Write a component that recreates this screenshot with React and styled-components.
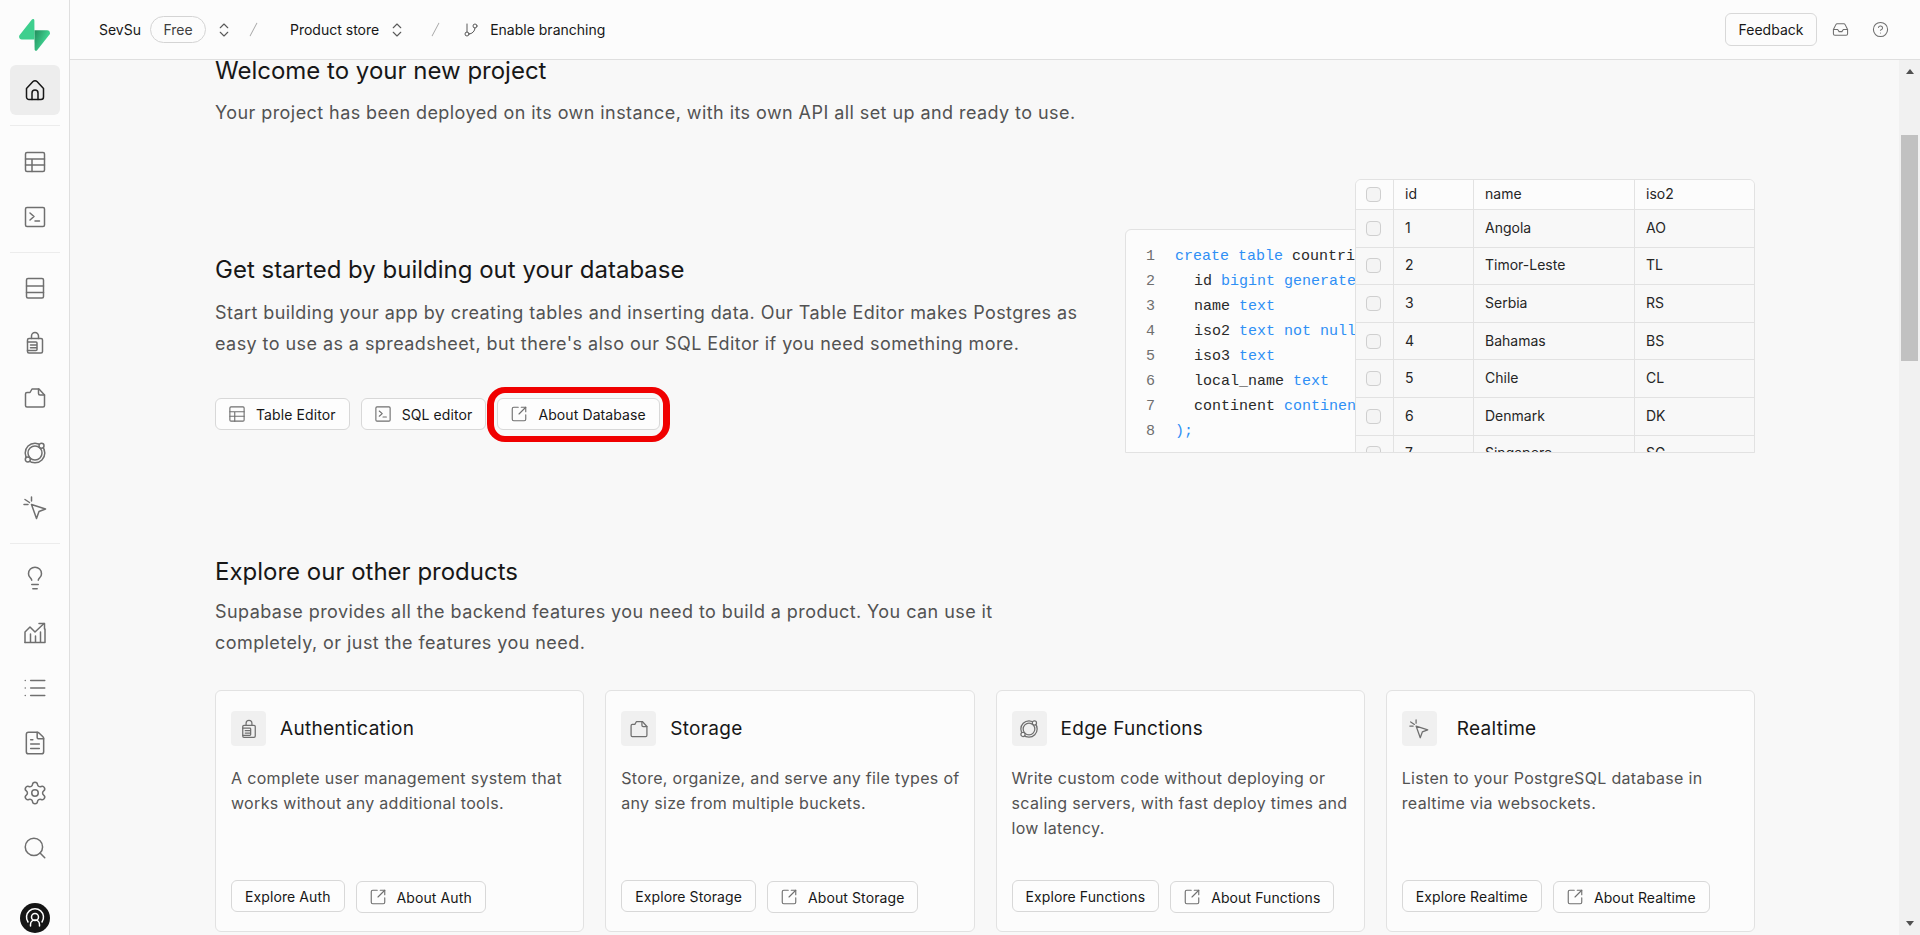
import styled, { createGlobalStyle } from 'styled-components';
import {
  ChevronsUpDown,
  GitBranch,
  Inbox,
  CircleHelp,
  SquareArrowOutUpRight,
  List,
  FileText,
  Settings,
  Search,
  Lightbulb,
} from 'lucide-react';

const GlobalStyle = createGlobalStyle`
  html, body {
    margin: 0;
    height: 100%;
    overflow: hidden;
    background: #f8f8f8;
    font-family: Inter, "Noto Sans", "Liberation Sans", sans-serif;
  }
  * { box-sizing: border-box; }
`;

const Page = styled.div`
  display: flex;
  height: 100vh;
  overflow: hidden;
`;

const Sidebar = styled.nav`
  flex: 0 0 70px;
  display: flex;
  flex-direction: column;
  align-items: center;
  background: #fcfcfc;
  border-right: 1px solid #dfdfdf;
  padding-top: 19px;
  overflow: hidden;
`;

const LogoMark = styled.svg`
  width: 31px;
  height: 32px;
  margin-bottom: 14px;
  flex: none;
`;

const NavGroup = styled.div`
  display: flex;
  flex-direction: column;
  gap: 5px;
`;

const NavButton = styled.div`
  width: 50px;
  height: 50px;
  display: flex;
  align-items: center;
  justify-content: center;
  border-radius: 6px;
  color: ${(p) => (p.$active ? '#171717' : '#6f6f6f')};
  background: ${(p) => (p.$active ? '#ededed' : 'transparent')};
`;

const NavDivider = styled.div`
  width: 50px;
  height: 1px;
  flex: none;
  background: #ececec;
  margin: 10px 0 ${(p) => p.$after ?? 10}px;
`;

const Avatar = styled.div`
  width: 30px;
  height: 30px;
  flex: none;
  border-radius: 50%;
  background: #151515;
  color: #fff;
  margin-top: 30px;
  display: flex;
  align-items: center;
  justify-content: center;
`;

const Column = styled.div`
  flex: 1;
  min-width: 0;
  display: flex;
  flex-direction: column;
`;

const Header = styled.header`
  flex: 0 0 60px;
  display: flex;
  align-items: center;
  justify-content: space-between;
  background: #fcfcfc;
  border-bottom: 1px solid #dfdfdf;
  padding: 0 31px 0 29px;
  font-size: 14px;
  color: #171717;
`;

const Crumbs = styled.div`
  display: flex;
  align-items: center;
`;

const Pill = styled.span`
  height: 27px;
  width: 56px;
  display: flex;
  align-items: center;
  justify-content: center;
  border: 1px solid #d4d4d4;
  border-radius: 14px;
  color: #3f3f3f;
  margin: 0 9px 0 9px;
`;

const CrumbIcon = styled.span`
  display: flex;
  color: #5a5a5a;
  margin: ${(p) => p.$margin ?? 0};
`;

const Slash = styled.span`
  width: 1px;
  height: 15px;
  background: #a8a8a8;
  transform: rotate(28deg);
  margin: ${(p) => p.$margin};
`;

const HeaderActions = styled.div`
  display: flex;
  align-items: center;
  gap: 23px;
  color: #6f6f6f;
`;

const FeedbackButton = styled.div`
  width: 92px;
  height: 33px;
  display: flex;
  align-items: center;
  justify-content: center;
  border: 1px solid #d8d8d8;
  border-radius: 6px;
  color: #171717;
  margin-right: -8px;
`;

const Body = styled.div`
  flex: 1;
  min-height: 0;
  display: flex;
`;

const Main = styled.main`
  flex: 1;
  min-width: 0;
  overflow: hidden;
  padding: 0 144px 0 145px;
`;

const Title = styled.h2`
  margin: 0;
  font-size: 24px;
  line-height: ${(p) => (p.$tight ? 22 : 32)}px;
  font-weight: 400;
  color: #171717;
`;

const Lead = styled.p`
  margin: ${(p) => p.$top ?? 10}px 0 0;
  max-width: ${(p) => p.$max ?? 880}px;
  font-size: 18px;
  line-height: 31px;
  letter-spacing: 0.43px;
  color: #525252;
`;

const GetStarted = styled.section`
  display: flex;
  justify-content: space-between;
  margin-top: 51px;
`;

const GetStartedText = styled.div`
  width: 890px;
  padding-top: 75px;
`;

const ButtonRow = styled.div`
  display: flex;
  align-items: flex-end;
  gap: 11px;
  margin-top: ${(p) => p.$top ?? 0}px;
`;

const Button = styled.div`
  height: 32px;
  display: flex;
  align-items: center;
  gap: 10px;
  padding: 0 13px 0 ${(p) => (p.$plain ? 13 : 12)}px;
  margin-bottom: ${(p) => p.$lift ?? 0}px;
  background: #fdfdfd;
  border: 1px solid #d8d8d8;
  border-radius: 6px;
  font-size: 14px;
  letter-spacing: 0.1px;
  color: #171717;
  white-space: nowrap;
  svg { color: #6f6f6f; flex: none; }
`;

const RingHolder = styled.div`
  position: relative;
`;

const Ring = styled.div`
  position: absolute;
  inset: -11.5px -10.5px;
  border-style: solid;
  border-color: #f00000;
  border-width: 6px 7px;
  border-radius: 18px;
`;

const Visual = styled.div`
  position: relative;
  width: 630px;
  height: 274px;
`;

const CodeCard = styled.div`
  position: absolute;
  left: 0;
  right: 0;
  top: 50px;
  bottom: 0;
  overflow: hidden;
  background: #fcfcfc;
  border: 1px solid #e2e2e2;
  border-radius: 6px 0 0 0;
  padding: 14px 0 0 20px;
`;

const CodeLine = styled.div`
  display: flex;
  height: 25px;
  line-height: 25px;
  font-family: "Liberation Mono", "DejaVu Sans Mono", monospace;
  font-size: 15px;
  white-space: pre;
  color: #2a2a2a;
`;

const LineNumber = styled.span`
  width: 29px;
  color: #6f6f6f;
  flex: none;
`;

const CodeText = styled.span`
  padding-left: ${(p) => (p.$indent ? 19 : 0)}px;
`;

const Keyword = styled.span`
  color: #2f8ff5;
`;

const PreviewTable = styled.div`
  position: absolute;
  left: 230px;
  right: 0;
  top: 0;
  bottom: 0;
  overflow: hidden;
  background: #f8f8f8;
  border: 1px solid #e2e2e2;
  border-radius: 6px 6px 0 0;
  font-size: 14px;
  color: #262626;
`;

const TableRow = styled.div`
  display: grid;
  grid-template-columns: 38px 80px 161px 1fr;
  height: ${(p) => (p.$head ? 30 : 37.6)}px;
  background: ${(p) => (p.$head ? '#fcfcfc' : 'transparent')};
  border-bottom: 1px solid #e2e2e2;
`;

const TableCell = styled.div`
  display: flex;
  align-items: center;
  padding: ${(p) => (p.$check ? '0 3px 0 0' : '0 0 2px 11px')};
  justify-content: ${(p) => (p.$check ? 'center' : 'flex-start')};
  border-right: ${(p) => (p.$last ? 0 : '1px solid #e2e2e2')};
`;

const Checkbox = styled.span`
  width: 15px;
  height: 15px;
  border: 1px solid #cfcfcf;
  border-radius: 4px;
  background: #f4f4f4;
`;

const Products = styled.section`
  margin-top: 103px;
`;

const CardGrid = styled.div`
  display: grid;
  grid-template-columns: repeat(4, 1fr);
  gap: 21px;
  margin-top: 32px;
`;

const Card = styled.article`
  height: 242px;
  display: flex;
  flex-direction: column;
  padding: 20px 8px 18px 15px;
  background: #fcfcfc;
  border: 1px solid #e2e2e2;
  border-radius: 6px;
`;

const CardHead = styled.div`
  display: flex;
  align-items: center;
  gap: ${(p) => p.$gap ?? 14}px;
`;

const IconTile = styled.div`
  width: 35px;
  height: 35px;
  display: flex;
  align-items: center;
  justify-content: center;
  border-radius: 4px;
  background: #f0f0f0;
  color: #6f6f6f;
`;

const CardTitle = styled.h3`
  margin: 0;
  font-size: 19px;
  letter-spacing: 0.3px;
  font-weight: 400;
  color: #171717;
`;

const CardBody = styled.p`
  flex: 1;
  margin: 20px 0 0;
  font-size: 16px;
  line-height: 25px;
  letter-spacing: 0.32px;
  color: #525252;
`;

const Scrollbar = styled.div`
  flex: 0 0 21px;
  display: flex;
  flex-direction: column;
  align-items: center;
  background: #f1f1f1;
`;

const ArrowUp = styled.span`
  width: 0;
  height: 0;
  margin-top: 9px;
  border: 4.5px solid transparent;
  border-top: 0;
  border-bottom: 5px solid #505050;
`;

const Thumb = styled.div`
  width: 17px;
  height: 226px;
  margin-top: 61px;
  background: #c1c1c1;
`;

const ArrowDown = styled.span`
  width: 0;
  height: 0;
  margin-top: auto;
  margin-bottom: 9px;
  border: 4.5px solid transparent;
  border-bottom: 0;
  border-top: 5px solid #505050;
`;

const Glyph = ({ size = 24, children }) => (
  <svg width={size} height={size} viewBox="0 0 24 24" fill="none" stroke="currentColor" strokeWidth="1.5" strokeLinecap="round" strokeLinejoin="round">
    {children}
  </svg>
);

const HomeIcon = (p) => (
  <Glyph {...p}>
    <path d="M3.500 10.500 10 3.500a2.800 2.800 0 0 1 4 0l6.500 7V19a2.500 2.500 0 0 1-2.500 2.500H6A2.500 2.500 0 0 1 3.500 19z" />
    <path d="M9 21.500V15a3 3 0 0 1 6 0v6.500" />
  </Glyph>
);

const TableIcon = (p) => (
  <Glyph {...p}>
    <rect x="2.500" y="2.500" width="19" height="19" rx="1.500" />
    <path d="M2.500 9h19M2.500 15h19M9 9v12.500" />
  </Glyph>
);

const TerminalIcon = (p) => (
  <Glyph {...p}>
    <rect x="2.500" y="2.500" width="19" height="19" rx="1.500" />
    <path d="m7 8 4 3.500L7 15M12 16h4.500" />
  </Glyph>
);

const DatabaseIcon = (p) => (
  <Glyph {...p}>
    <rect x="3.500" y="2.500" width="17" height="19.500" rx="1.500" />
    <path d="M3.500 10h17M3.500 16.500h17" />
  </Glyph>
);

const AuthIcon = (p) => (
  <Glyph {...p}>
    <path d="M8.500 7.500V5a3.500 3.500 0 0 1 7 0v2.500" />
    <rect x="4.500" y="7.500" width="15" height="14.500" rx="1.500" />
    <path d="M4.500 11H13a1 1 0 0 1 1 1v6.500a1 1 0 0 1-1 1H4.500M7.500 14h6.500M7.500 16.800h6.500" />
  </Glyph>
);

const StorageIcon = (p) => (
  <Glyph {...p}>
    <path d="M2.500 19.500V8A1.500 1.500 0 0 1 4 6.500h3L9 3h7l5.500 6v10.500A1.500 1.500 0 0 1 20 21H4a1.500 1.500 0 0 1-1.500-1.500z" />
    <path d="M15.500 3v4.500a1.500 1.500 0 0 0 1.500 1.500h4.500" />
  </Glyph>
);

const EdgeIcon = (p) => (
  <Glyph {...p}>
    <circle cx="12" cy="12" r="9.800" />
    <circle cx="12" cy="12" r="7" />
    <circle cx="18.500" cy="4.800" r="2.500" fill="#fcfcfc" />
    <circle cx="4.800" cy="18.500" r="2.500" fill="#fcfcfc" />
  </Glyph>
);

const RealtimeIcon = (p) => (
  <Glyph {...p}>
    <path d="m8.500 8.500 14 4.500-6.500 2.500-2.500 7z" />
    <path d="M6.500 6.500 2 3.500M8.500 5V1M5 8.500H1" />
  </Glyph>
);

const ReportsIcon = (p) => (
  <Glyph {...p}>
    <path d="M2 21.500V11l5-5 5 5 9-8.500" />
    <path d="M16 2.500h5.500v5.500M2 21.500h20V8M7.500 21.500V13M12.500 21.500V15M17.500 21.500V11" />
  </Glyph>
);

const AvatarIcon = () => (
  <Glyph size={24}>
    <path d="M5 16a8.500 8.500 0 1 1 14 0" />
    <circle cx="12" cy="11" r="3.500" />
    <path d="M7.500 20v-1.500a4.500 4.500 0 0 1 9 0V20" />
  </Glyph>
);

const Logo = () => (
  <LogoMark viewBox="0 0 109 113">
    <defs>
      <linearGradient id="bolt" x1="53.97" y1="54.97" x2="94.16" y2="71.83" gradientUnits="userSpaceOnUse">
        <stop stopColor="#249361" />
        <stop offset="1" stopColor="#3ECF8E" />
      </linearGradient>
    </defs>
    <path d="M63.7076 110.284C60.8481 113.885 55.0502 111.912 54.9813 107.314L53.9738 40.0627L99.1935 40.0627C107.384 40.0627 111.952 49.5228 106.859 55.9374L63.7076 110.284Z" fill="url(#bolt)" />
    <path d="M45.317 2.07103C48.1765 -1.53037 53.9745 0.442937 54.0434 5.041L54.4849 72.2922H9.83113C1.64038 72.2922 -2.92775 62.8321 2.1655 56.4175L45.317 2.07103Z" fill="#3ECF8E" />
  </LogoMark>
);

const navIcon = { size: 26, strokeWidth: 1.4 };

const rows = [
  ['1', 'Angola', 'AO'],
  ['2', 'Timor-Leste', 'TL'],
  ['3', 'Serbia', 'RS'],
  ['4', 'Bahamas', 'BS'],
  ['5', 'Chile', 'CL'],
  ['6', 'Denmark', 'DK'],
  ['7', 'Singapore', 'SG'],
];

const products = [
  {
    name: 'Authentication',
    Icon: AuthIcon,
    text: 'A complete user management system that works without any additional tools.',
    explore: 'Explore Auth',
    about: 'About Auth',
  },
  {
    name: 'Storage',
    Icon: StorageIcon,
    text: 'Store, organize, and serve any file types of any size from multiple buckets.',
    explore: 'Explore Storage',
    about: 'About Storage',
  },
  {
    name: 'Edge Functions',
    Icon: EdgeIcon,
    text: 'Write custom code without deploying or scaling servers, with fast deploy times and low latency.',
    explore: 'Explore Functions',
    about: 'About Functions',
  },
  {
    name: 'Realtime',
    Icon: RealtimeIcon,
    gap: 20,
    text: 'Listen to your PostgreSQL database in realtime via websockets.',
    explore: 'Explore Realtime',
    about: 'About Realtime',
  },
];

const App = () => (
  <Page>
    <GlobalStyle />
    <Sidebar>
      <Logo />
      <NavButton $active><HomeIcon /></NavButton>
      <NavDivider $after={11} />
      <NavGroup>
        <NavButton><TableIcon /></NavButton>
        <NavButton><TerminalIcon /></NavButton>
      </NavGroup>
      <NavDivider />
      <NavGroup>
        <NavButton><DatabaseIcon /></NavButton>
        <NavButton><AuthIcon /></NavButton>
        <NavButton><StorageIcon /></NavButton>
        <NavButton><EdgeIcon /></NavButton>
        <NavButton><RealtimeIcon /></NavButton>
      </NavGroup>
      <NavDivider $after={9} />
      <NavGroup>
        <NavButton><Lightbulb {...navIcon} /></NavButton>
        <NavButton><ReportsIcon /></NavButton>
        <NavButton><List {...navIcon} /></NavButton>
        <NavButton><FileText {...navIcon} /></NavButton>
      </NavGroup>
      <NavGroup>
        <NavButton><Settings {...navIcon} /></NavButton>
        <NavButton><Search {...navIcon} /></NavButton>
      </NavGroup>
      <Avatar><AvatarIcon /></Avatar>
    </Sidebar>
    <Column>
      <Header>
        <Crumbs>
          SevSu
          <Pill>Free</Pill>
          <CrumbIcon><ChevronsUpDown size={18} strokeWidth={1.5} /></CrumbIcon>
          <Slash $margin="0 36px 0 20px" />
          Product store
          <CrumbIcon $margin="0 0 0 9px"><ChevronsUpDown size={18} strokeWidth={1.5} /></CrumbIcon>
          <Slash $margin="0 27px 0 29px" />
          <CrumbIcon $margin="0 11px 0 0"><GitBranch size={16} strokeWidth={1.5} /></CrumbIcon>
          Enable branching
        </Crumbs>
        <HeaderActions>
          <FeedbackButton>Feedback</FeedbackButton>
          <Inbox size={17} strokeWidth={1.5} />
          <CircleHelp size={17} strokeWidth={1.5} />
        </HeaderActions>
      </Header>
      <Body>
        <Main>
          <Title $tight>Welcome to your new project</Title>
          <Lead $top={15}>Your project has been deployed on its own instance, with its own API all set up and ready to use.</Lead>
          <GetStarted>
            <GetStartedText>
              <Title>Get started by building out your database</Title>
              <Lead $top={11}>
                Start building your app by creating tables and inserting data. Our Table Editor makes Postgres as easy to use as a spreadsheet, but there's also our SQL Editor if you need something more.
              </Lead>
              <ButtonRow $top={39}>
                <Button><TableIcon size={18} />Table Editor</Button>
                <Button><TerminalIcon size={18} />SQL editor</Button>
                <RingHolder>
                  <Button><SquareArrowOutUpRight size={18} strokeWidth={1.5} />About Database</Button>
                  <Ring />
                </RingHolder>
              </ButtonRow>
            </GetStartedText>
            <Visual>
              <CodeCard>
                <CodeLine><LineNumber>1</LineNumber><CodeText><Keyword>create table</Keyword> countries (</CodeText></CodeLine>
                <CodeLine><LineNumber>2</LineNumber><CodeText $indent>id <Keyword>bigint generated by default as identity primary key</Keyword></CodeText></CodeLine>
                <CodeLine><LineNumber>3</LineNumber><CodeText $indent>name <Keyword>text</Keyword></CodeText></CodeLine>
                <CodeLine><LineNumber>4</LineNumber><CodeText $indent>iso2 <Keyword>text not null</Keyword></CodeText></CodeLine>
                <CodeLine><LineNumber>5</LineNumber><CodeText $indent>iso3 <Keyword>text</Keyword></CodeText></CodeLine>
                <CodeLine><LineNumber>6</LineNumber><CodeText $indent>local_name <Keyword>text</Keyword></CodeText></CodeLine>
                <CodeLine><LineNumber>7</LineNumber><CodeText $indent>continent <Keyword>continents</Keyword></CodeText></CodeLine>
                <CodeLine><LineNumber>8</LineNumber><CodeText><Keyword>);</Keyword></CodeText></CodeLine>
              </CodeCard>
              <PreviewTable>
                <TableRow $head>
                  <TableCell $check><Checkbox /></TableCell>
                  <TableCell>id</TableCell>
                  <TableCell>name</TableCell>
                  <TableCell $last>iso2</TableCell>
                </TableRow>
                {rows.map(([id, name, iso]) => (
                  <TableRow key={id}>
                    <TableCell $check><Checkbox /></TableCell>
                    <TableCell>{id}</TableCell>
                    <TableCell>{name}</TableCell>
                    <TableCell $last>{iso}</TableCell>
                  </TableRow>
                ))}
              </PreviewTable>
            </Visual>
          </GetStarted>
          <Products>
            <Title>Explore our other products</Title>
            <Lead $top={8} $max={800}>
              Supabase provides all the backend features you need to build a product. You can use it completely, or just the features you need.
            </Lead>
            <CardGrid>
              {products.map(({ name, Icon, gap, text, explore, about }) => (
                <Card key={name}>
                  <CardHead $gap={gap}>
                    <IconTile><Icon size={20} /></IconTile>
                    <CardTitle>{name}</CardTitle>
                  </CardHead>
                  <CardBody>{text}</CardBody>
                  <ButtonRow>
                    <Button $plain $lift={1}>{explore}</Button>
                    <Button><SquareArrowOutUpRight size={18} strokeWidth={1.5} />{about}</Button>
                  </ButtonRow>
                </Card>
              ))}
            </CardGrid>
          </Products>
        </Main>
        <Scrollbar>
          <ArrowUp />
          <Thumb />
          <ArrowDown />
        </Scrollbar>
      </Body>
    </Column>
  </Page>
);

export default App;
